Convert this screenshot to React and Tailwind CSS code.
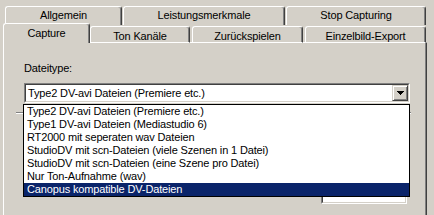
import React from "react";

const tabBase =
  "flex items-center justify-center border-t border-l border-r border-t-white border-l-white border-r-[#404040] rounded-t-[3px] shadow-[inset_-1px_0_0_#808080] bg-[#d4d0c8] leading-[13px] whitespace-nowrap";

const items = [
  "Type2 DV-avi Dateien (Premiere etc.)",
  "Type1 DV-avi Dateien (Mediastudio 6)",
  "RT2000 mit seperaten wav Dateien",
  "StudioDV mit scn-Dateien (viele Szenen in 1 Datei)",
  "StudioDV mit scn-Dateien (eine Szene pro Datei)",
  "Nur Ton-Aufnahme (wav)",
  "Canopus kompatible DV-Dateien",
];

function Arrow() {
  return (
    <svg width="7" height="4" viewBox="0 0 7 4" shapeRendering="crispEdges">
      <rect x="0" y="0" width="7" height="1" fill="#000" />
      <rect x="1" y="1" width="5" height="1" fill="#000" />
      <rect x="2" y="2" width="3" height="1" fill="#000" />
      <rect x="3" y="3" width="1" height="1" fill="#000" />
    </svg>
  );
}

export default function App() {
  return (
    <div
      className="relative w-[434px] h-[215px] overflow-hidden bg-[#d4d0c8] text-[11px] text-black tracking-[-0.15px]"
      style={{ fontFamily: '"Liberation Sans", Arial, sans-serif' }}
    >
      {/* back tab row */}
      <div className="flex pl-[5px] pt-[6px]">
        <div className={`${tabBase} w-[117px] h-[19px] items-start pt-[2px]`}>Allgemein</div>
        <div className={`${tabBase} w-[162px] h-[19px] ml-[1px] items-start pt-[2px]`}>Leistungsmerkmale</div>
        <div className={`${tabBase} w-[140px] h-[19px] ml-[1px] items-start pt-[2px]`}>Stop Capturing</div>
      </div>

      {/* front tab row */}
      <div className="relative z-10 flex items-end pl-[3px] -mt-[2px] h-[20px] -mb-[1px]">
        <div className={`${tabBase} w-[87px] h-[20px] items-start pt-[3px]`}>Capture</div>
        <div className={`${tabBase} w-[100px] h-[17px] items-start pt-[3px] border-b border-b-white`}>Ton Kanäle</div>
        <div className={`${tabBase} w-[111px] h-[17px] ml-[2px] items-start pt-[3px] border-b border-b-white`}>Zurückspielen</div>
        <div className={`${tabBase} w-[121px] h-[17px] ml-[2px] items-start pt-[3px] border-b border-b-white`}>Einzelbild-Export</div>
      </div>

      {/* panel */}
      <div className="ml-[3px] w-[424px] h-[200px] border-t border-l border-r border-t-white border-l-white border-r-[#404040] shadow-[inset_-1px_0_0_#808080] pl-[20px] pt-[19px]">
        <div className="leading-[13px]">Dateitype:</div>

        {/* combo box */}
        <div className="mt-[8px] w-[386px] h-[20px] border border-t-[#808080] border-l-[#808080] border-b-white border-r-white">
          <div className="h-full flex items-center bg-white border border-t-[#404040] border-l-[#404040] border-b-[#d4d0c8] border-r-[#d4d0c8]">
            <div className="flex-1 pl-[2px] leading-[13px] whitespace-nowrap">{items[0]}</div>
            <div className="w-[16px] h-[16px] flex items-center justify-center bg-[#d4d0c8] border border-t-[#d4d0c8] border-l-[#d4d0c8] border-b-[#404040] border-r-[#404040] shadow-[inset_1px_1px_0_#ffffff,inset_-1px_-1px_0_#808080]">
              <Arrow />
            </div>
          </div>
        </div>

        {/* etched separator */}
        <div className="mt-[9px] -ml-[8px] w-[395px] h-[2px] border-t border-t-[#808080] border-b border-b-white" />

        {/* edit box partly hidden */}
        <div className="mt-[64px] ml-[297px] w-[86px] h-[26px] border border-t-[#808080] border-l-[#808080] border-b-white border-r-white">
          <div className="h-full bg-white border border-t-[#404040] border-l-[#404040] border-b-[#d4d0c8] border-r-[#d4d0c8]" />
        </div>
      </div>

      {/* dropdown list overlay */}
      <div className="absolute left-[23px] top-[104px] z-20 w-[387px] border border-black bg-white">
        {items.map((t, i) => (
          <div
            key={t}
            className={
              i === 6
                ? "h-[13px] leading-[13px] pl-[3px] whitespace-nowrap bg-[#0a246a] text-white"
                : "h-[13px] leading-[13px] pl-[3px] whitespace-nowrap"
            }
          >
            {t}
          </div>
        ))}
      </div>
    </div>
  );
}
